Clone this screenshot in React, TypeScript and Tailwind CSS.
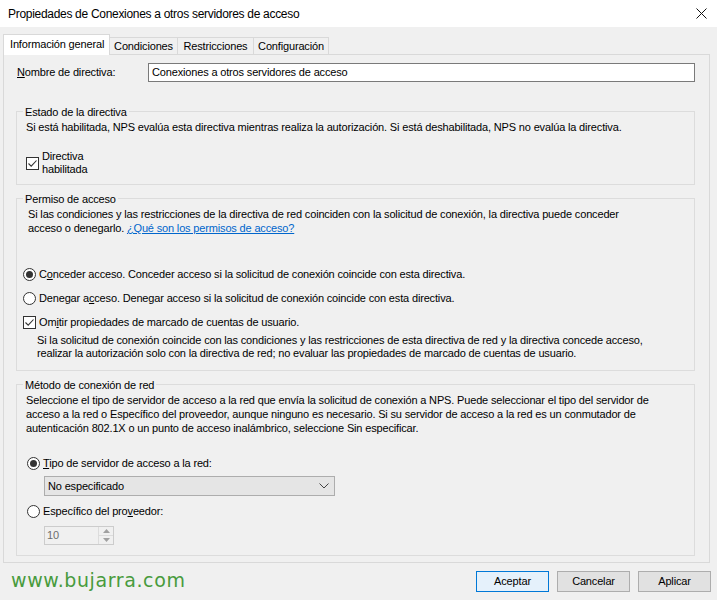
import React from "react";

const F = { fontFamily: '"Liberation Sans", Arial, sans-serif' };

function Check() {
  return (
    <span className="w-[13px] h-[13px] border border-[#333] bg-white flex items-center justify-center shrink-0">
      <svg width="11" height="11" viewBox="0 0 11 11">
        <path d="M1.5 5.5 L4.2 8.2 L9.5 2.5" fill="none" stroke="#333" strokeWidth="1.1" />
      </svg>
    </span>
  );
}

function Radio({ on }: { on?: boolean }) {
  return (
    <span className="w-[13px] h-[13px] rounded-full border border-[#333] bg-white flex items-center justify-center shrink-0">
      {on && <span className="w-[7px] h-[7px] rounded-full bg-[#333]" />}
    </span>
  );
}

function Group({ title, h, mt, children }: { title: string; h: string; mt: string; children: React.ReactNode }) {
  return (
    <div className={`relative ml-[12px] w-[679px] border border-[#dcdcdc] ${h} ${mt}`}>
      <span className="absolute -top-[7px] left-[6px] bg-[#f0f0f0] px-[2px] leading-[15px] whitespace-nowrap">{title}</span>
      {children}
    </div>
  );
}

export default function App() {
  return (
    <div className="w-[717px] h-[600px] bg-[#f0f0f0] text-[11px] tracking-[-0.16px] text-black overflow-hidden" style={F}>
      {/* Title bar */}
      <div className="h-[27px] bg-white flex items-center justify-between pl-[8px] pr-[10px]">
        <span className="text-[12px] tracking-[-0.3px]">Propiedades de Conexiones a otros servidores de acceso</span>
        <svg width="11" height="11" viewBox="0 0 11 11">
          <path d="M0.5 0.5 L10.5 10.5 M10.5 0.5 L0.5 10.5" stroke="#111" strokeWidth="1" />
        </svg>
      </div>

      {/* Tabs */}
      <div className="mt-[7px] h-[20px] pl-[3px] flex items-end relative z-10 whitespace-nowrap">
        <div className="h-[21px] mb-[-1px] w-[107px] bg-white border border-b-0 border-[#d9d9d9] pl-[6px] leading-[19px]">
          Información general
        </div>
        <div className="h-[17px] w-[68px] border-t border-r border-[#d9d9d9] flex items-center justify-center">Condiciones</div>
        <div className="h-[17px] w-[76px] border-t border-r border-[#d9d9d9] flex items-center justify-center">Restricciones</div>
        <div className="h-[17px] w-[75px] border-t border-r border-[#d9d9d9] flex items-center justify-center">Configuración</div>
      </div>

      {/* Panel */}
      <div className="ml-[3px] w-[707px] h-[509px] border border-[#d9d9d9] flex flex-col">
        <div className="mt-[8px] flex items-center h-[19px]">
          <span className="pl-[13px] w-[144px] whitespace-nowrap"><span className="underline">N</span>ombre de directiva:</span>
          <div className="w-[547px] h-[19px] border border-[#7a7a7a] bg-white pl-[3px] leading-[17px]">
            Conexiones a otros servidores de acceso
          </div>
        </div>

        <Group title="Estado de la directiva" h="h-[74px]" mt="mt-[29px]">
          <div className="pt-[8px] pl-[9px] leading-[14px]">
            Si está habilitada, NPS evalúa esta directiva mientras realiza la autorización. Si está deshabilitada, NPS no evalúa la directiva.
          </div>
          <div className="mt-[16px] ml-[9px] flex items-center gap-[3px]">
            <Check />
            <span className="leading-[13px]">Directiva<br />habilitada</span>
          </div>
        </Group>

        <Group title="Permiso de acceso" h="h-[173px]" mt="mt-[13px]">
          <div className="pt-[8px] pl-[11px] pr-[10px] leading-[14px]">
            Si las condiciones y las restricciones de la directiva de red coinciden con la solicitud de conexión, la directiva puede conceder
            <br />
            acceso o denegarlo. <span className="text-[#0066cc] underline">¿Qué son los permisos de acceso?</span>
          </div>
          <div className="mt-[32px] ml-[6px] h-[14px] flex items-center gap-[3px]">
            <Radio on />
            <span>C<span className="underline">o</span>nceder acceso. Conceder acceso si la solicitud de conexión coincide con esta directiva.</span>
          </div>
          <div className="mt-[10px] ml-[6px] h-[14px] flex items-center gap-[3px]">
            <Radio />
            <span>Denegar a<span className="underline">c</span>ceso. Denegar acceso si la solicitud de conexión coincide con esta directiva.</span>
          </div>
          <div className="mt-[10px] ml-[6px] h-[14px] flex items-center gap-[3px]">
            <Check />
            <span>Om<span className="underline">i</span>tir propiedades de marcado de cuentas de usuario.</span>
          </div>
          <div className="mt-[5px] ml-[20px] leading-[13px]">
            Si la solicitud de conexión coincide con las condiciones y las restricciones de esta directiva de red y la directiva concede acceso,
            <br />
            realizar la autorización solo con la directiva de red; no evaluar las propiedades de marcado de cuentas de usuario.
          </div>
        </Group>

        <Group title="Método de conexión de red" h="h-[172px]" mt="mt-[13px]">
          <div className="pt-[8px] pl-[9px] pr-[10px] leading-[14px]">
            Seleccione el tipo de servidor de acceso a la red que envía la solicitud de conexión a NPS. Puede seleccionar el tipo del servidor de
            <br />
            acceso a la red o Específico del proveedor, aunque ninguno es necesario. Si su servidor de acceso a la red es un conmutador de
            <br />
            autenticación 802.1X o un punto de acceso inalámbrico, seleccione Sin especificar.
          </div>
          <div className="mt-[21px] ml-[10px] h-[14px] flex items-center gap-[3px]">
            <Radio on />
            <span><span className="underline">T</span>ipo de servidor de acceso a la red:</span>
          </div>
          <div className="mt-[6px] ml-[27px] w-[291px] h-[20px] border border-[#adadad] bg-[#e5e5e5] flex items-center justify-between pl-[3px] pr-[5px]">
            <span>No especificado</span>
            <svg width="10" height="6" viewBox="0 0 10 6">
              <path d="M0.5 0.5 L5 5 L9.5 0.5" fill="none" stroke="#444" strokeWidth="1" />
            </svg>
          </div>
          <div className="mt-[8px] ml-[10px] h-[14px] flex items-center gap-[3px]">
            <Radio />
            <span>Específico del pro<span className="underline">v</span>eedor:</span>
          </div>
          <div className="mt-[8px] ml-[27px] w-[70px] h-[19px] border border-[#cccccc] bg-[#f0f0f0] flex">
            <span className="flex-1 pl-[2px] leading-[17px] text-[#6d6d6d]">10</span>
            <div className="w-[15px] flex flex-col border-l border-[#dcdcdc]">
              <div className="flex-1 flex items-center justify-center border-b border-[#dcdcdc]">
                <svg width="7" height="4" viewBox="0 0 7 4"><path d="M0 4 L3.5 0 L7 4 Z" fill="#a0a0a0" /></svg>
              </div>
              <div className="flex-1 flex items-center justify-center">
                <svg width="7" height="4" viewBox="0 0 7 4"><path d="M0 0 L3.5 4 L7 0 Z" fill="#a0a0a0" /></svg>
              </div>
            </div>
          </div>
        </Group>
      </div>

      {/* Footer */}
      <div className="flex items-start mt-[8px]">
        <span
          className="ml-[11px] text-[19px] leading-[18px] tracking-[0.6px] text-[#489b3d]"
          style={{ fontFamily: '"DejaVu Sans", Verdana, sans-serif' }}
        >
          www.bujarra.com
        </span>
        <div className="ml-auto mr-[6px] flex gap-[8px]">
          <button className="w-[73px] h-[21px] border border-[#0078d7] bg-[#e5f1fb]">Aceptar</button>
          <button className="w-[73px] h-[21px] border border-[#adadad] bg-[#e1e1e1]">Cancelar</button>
          <button className="w-[73px] h-[21px] border border-[#adadad] bg-[#e1e1e1]">Aplicar</button>
        </div>
      </div>
    </div>
  );
}
